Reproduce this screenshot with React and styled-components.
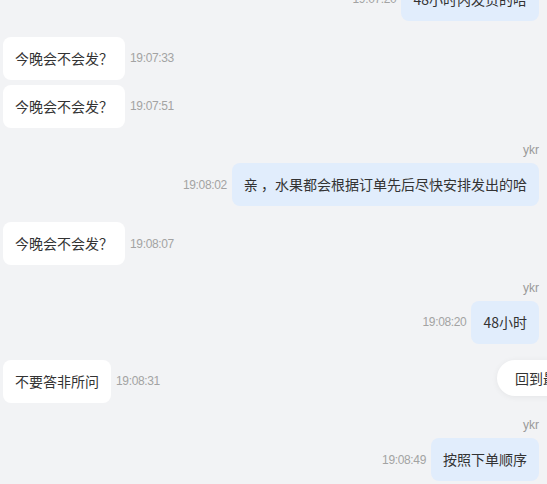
import React from "react";
import styled, { createGlobalStyle } from "styled-components";

const Global = createGlobalStyle`
  html, body { margin: 0; padding: 0; height: 100%; overflow: hidden; background: #f2f3f5; }
  #root { height: 100%; }
`;

const Page = styled.div`
  position: relative;
  height: 100vh;
  overflow: hidden;
  background: #f2f3f5;
  font-family: "Noto Sans CJK SC", "Noto Sans", sans-serif;
`;

const List = styled.div`
  height: 100%;
  display: flex;
  flex-direction: column;
  justify-content: flex-end;
  padding: 0 8px 3px 3px;
  box-sizing: border-box;
`;

const LeftRow = styled.div`
  display: flex;
  align-items: center;
  gap: 5px;
  margin-top: ${(p) => p.$gap}px;
  flex-shrink: 0;
`;

const RightGroup = styled.div`
  display: flex;
  flex-direction: column;
  align-items: flex-end;
  margin-top: ${(p) => p.$gap}px;
  flex-shrink: 0;
`;

const Name = styled.div`
  font-family: "Liberation Sans", Arial, sans-serif;
  font-size: 12px;
  line-height: 17px;
  color: #999;
  margin-bottom: 4px;
`;

const RightRow = styled.div`
  display: flex;
  align-items: center;
  gap: 5px;
`;

const Bubble = styled.div`
  background: ${(p) => (p.$mine ? "#e1edfc" : "#ffffff")};
  color: #333;
  font-size: 14px;
  line-height: 21px;
  padding: 11px 12px;
  border-radius: 8px;
  white-space: pre;
`;

const Time = styled.span`
  font-family: "Liberation Sans", Arial, sans-serif;
  font-size: 12px;
  letter-spacing: -0.35px;
  color: #a3a3a3;
  white-space: nowrap;
`;

const BackButton = styled.button`
  position: absolute;
  left: 497px;
  top: 360px;
  height: 36px;
  padding: 0 18px;
  border: none;
  border-radius: 18px;
  background: #fff;
  box-shadow: 0 1px 6px rgba(0, 0, 0, 0.06);
  font-family: "Noto Sans CJK SC", sans-serif;
  font-size: 14px;
  color: #333;
  white-space: nowrap;
`;

const messages = [
  { mine: true, name: "ykr", text: "48小时内发货的哈", time: "19:07:20" },
  { mine: false, text: "今晚会不会发？", time: "19:07:33" },
  { mine: false, text: "今晚会不会发？", time: "19:07:51" },
  { mine: true, name: "ykr", text: "亲 ，水果都会根据订单先后尽快安排发出的哈", time: "19:08:02" },
  { mine: false, text: "今晚会不会发？", time: "19:08:07" },
  { mine: true, name: "ykr", text: "48小时", time: "19:08:20" },
  { mine: false, text: "不要答非所问", time: "19:08:31" },
  { mine: true, name: "ykr", text: "按照下单顺序", time: "19:08:49" },
];

export default function App() {
  return (
    <Page>
      <Global />
      <List>
        {messages.map((m, i) => {
          const prev = messages[i - 1];
          if (m.mine) {
            return (
              <RightGroup key={i} $gap={14.5}>
                <Name>{m.name}</Name>
                <RightRow>
                  <Time>{m.time}</Time>
                  <Bubble $mine>{m.text}</Bubble>
                </RightRow>
              </RightGroup>
            );
          }
          const gap = prev && !prev.mine ? 5 : 16;
          return (
            <LeftRow key={i} $gap={gap}>
              <Bubble>{m.text}</Bubble>
              <Time>{m.time}</Time>
            </LeftRow>
          );
        })}
      </List>
      <BackButton>回到最新</BackButton>
    </Page>
  );
}
